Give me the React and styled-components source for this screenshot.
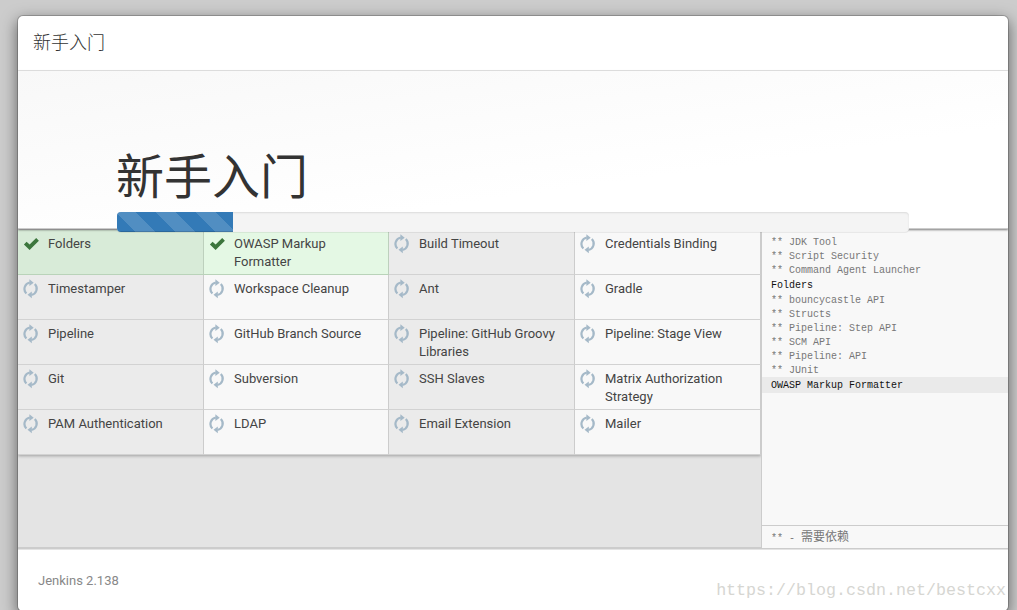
import React from "react";
import styled, { createGlobalStyle } from "styled-components";

const plugins = [
  { name: "Folders", done: true },
  { name: "OWASP Markup Formatter", done: true },
  { name: "Build Timeout" },
  { name: "Credentials Binding" },
  { name: "Timestamper" },
  { name: "Workspace Cleanup" },
  { name: "Ant" },
  { name: "Gradle" },
  { name: "Pipeline" },
  { name: "GitHub Branch Source" },
  { name: "Pipeline: GitHub Groovy Libraries" },
  { name: "Pipeline: Stage View" },
  { name: "Git" },
  { name: "Subversion" },
  { name: "SSH Slaves" },
  { name: "Matrix Authorization Strategy" },
  { name: "PAM Authentication" },
  { name: "LDAP" },
  { name: "Email Extension" },
  { name: "Mailer" },
];

const log = [
  { text: "** JDK Tool" },
  { text: "** Script Security" },
  { text: "** Command Agent Launcher" },
  { text: "Folders", selected: true },
  { text: "** bouncycastle API" },
  { text: "** Structs" },
  { text: "** Pipeline: Step API" },
  { text: "** SCM API" },
  { text: "** Pipeline: API" },
  { text: "** JUnit" },
  { text: "OWASP Markup Formatter", selected: true, current: true },
];

const CheckIcon = () => (
  <svg width="16" height="14" viewBox="0 0 16 14">
    <path d="M0.9 7.4 L3.6 4.7 L6.6 7.6 L13.2 1.1 L15.9 3.7 L6.6 12.9 Z" fill="#3c763d" />
  </svg>
);

const RefreshIcon = () => (
  <svg width="16" height="20" viewBox="0 0 16 20">
    <g fill="none" stroke="#a5b9c8" strokeWidth="2.2">
      <path d="M3.4 14.5 A6.5 6.5 0 0 1 6.8 3.5" />
      <path d="M11.8 5 A6.5 6.5 0 0 1 8.4 16" />
    </g>
    <path d="M6.4 0.3 L10.7 3.7 L6.4 7 Z" fill="#a5b9c8" />
    <path d="M8.8 19.2 L4.5 15.8 L8.8 12.5 Z" fill="#a5b9c8" />
  </svg>
);

const App = () => {
  return (
    <>
      <GlobalStyle />
      <Dialog>
        <Header>新手入门</Header>
        <Hero>
          <Title>新手入门</Title>
          <Progress>
            <ProgressBar />
          </Progress>
        </Hero>
        <Content>
          <PluginPane>
            <PluginGrid>
              {plugins.map((plugin, index) => (
                <Plugin key={plugin.name} $done={plugin.done} $odd={index % 2 === 0}>
                  <IconSlot $done={plugin.done}>
                    {plugin.done ? <CheckIcon /> : <RefreshIcon />}
                  </IconSlot>
                  <span>{plugin.name}</span>
                </Plugin>
              ))}
            </PluginGrid>
          </PluginPane>
          <Console>
            <LogList>
              {log.map((line) => (
                <LogLine key={line.text} $selected={line.selected} $current={line.current}>
                  {line.text}
                </LogLine>
              ))}
            </LogList>
            <Legend>
              ** - <b>需要依赖</b>
            </Legend>
          </Console>
        </Content>
        <Footer>Jenkins 2.138</Footer>
      </Dialog>
      <Watermark>https://blog.csdn.net/bestcxx</Watermark>
    </>
  );
};

const GlobalStyle = createGlobalStyle`
  * {
    box-sizing: border-box;
  }
  body {
    margin: 0;
    height: 610px;
    overflow: hidden;
    background: #ccc;
    color: #333;
    font-family: Roboto, "Noto Sans CJK SC", sans-serif;
    font-size: 13px;
  }
`;

const Dialog = styled.div`
  display: flex;
  flex-direction: column;
  width: 992px;
  height: 597px;
  margin: 15px 0 0 17px;
  overflow: hidden;
  background: #fff;
  background-clip: padding-box;
  border: 1px solid rgba(0, 0, 0, 0.2);
  border-radius: 6px;
  box-shadow: 0 5px 15px rgba(0, 0, 0, 0.5);
`;

const Header = styled.div`
  flex: none;
  height: 55px;
  padding: 0 15px;
  border-bottom: 1px solid #e5e5e5;
  font-family: "Noto Sans CJK SC", sans-serif;
  font-size: 18px;
  font-weight: 300;
  line-height: 51px;
`;

const Hero = styled.div`
  position: relative;
  z-index: 1;
  flex: none;
  height: 158px;
  padding: 71px 99px 0;
  background: linear-gradient(172deg, #f8f8f8 0%, #fff 66%);
  border-bottom: 1px solid #ccc;
  box-shadow: 0 1px 2px rgba(0, 0, 0, 0.5);
`;

const Title = styled.h1`
  height: 70px;
  margin: 0 0 0 -1px;
  font-family: "Noto Sans CJK SC", sans-serif;
  font-size: 48px;
  font-weight: 400;
  line-height: 62px;
`;

const Progress = styled.div`
  height: 20px;
  overflow: hidden;
  background: #f4f4f4;
  border-radius: 4px;
  box-shadow: inset 0 1px 2px rgba(0, 0, 0, 0.1), 0 1px 0 rgba(0, 0, 0, 0.06);
`;

const ProgressBar = styled.div`
  width: 116px;
  height: 100%;
  background-color: #337ab7;
  background-image: linear-gradient(
    45deg,
    rgba(255, 255, 255, 0.15) 25%,
    transparent 25%,
    transparent 50%,
    rgba(255, 255, 255, 0.15) 50%,
    rgba(255, 255, 255, 0.15) 75%,
    transparent 75%
  );
  background-position: -1px 0;
  background-size: 40px 40px;
  box-shadow: inset 0 -1px 0 rgba(0, 0, 0, 0.15);
`;

const Content = styled.div`
  display: flex;
  flex: none;
  height: 321px;
  border-bottom: 1px solid #e4e4e4;
`;

const PluginPane = styled.div`
  width: 743px;
  padding-top: 1px;
  background: #e4e4e4;
  border-bottom: 2px solid #ccc;
`;

const PluginGrid = styled.div`
  display: grid;
  grid-template-columns: 186px 185px 186px 186px;
  grid-auto-rows: 45px;
  box-shadow: 0 1px 3px rgba(0, 0, 0, 0.3);
`;

const Plugin = styled.div`
  display: flex;
  padding: 5px 17px 0 5px;
  color: #444;
  line-height: 18px;
  background: ${({ $done, $odd }) =>
    $done ? ($odd ? "#d8ebd8" : "#e4f8e4") : $odd ? "#ebebeb" : "#f8f8f8"};
  border-right: 1px solid ${({ $done }) => ($done ? "#bdd0bd" : "#ccc")};
  border-bottom: 1px solid ${({ $done }) => ($done ? "#b9d3b9" : "#d2d2d2")};
`;

const IconSlot = styled.span`
  flex: none;
  width: 25px;
  padding-top: ${({ $done }) => ($done ? "2px" : "0")};
  margin-top: ${({ $done }) => ($done ? "0" : "-1px")};

  svg {
    display: block;
  }
`;

const Console = styled.div`
  display: flex;
  flex: 1;
  flex-direction: column;
  background: #f8f8f8;
  border-left: 1px solid #ccc;
  border-bottom: 1px solid #ccc;
  color: #777;
  font-family: "Liberation Mono", "Noto Sans CJK SC", monospace;
  font-size: 10px;
`;

const LogList = styled.div`
  flex: 1;
  padding-top: 6px;
`;

const LogLine = styled.div`
  height: ${({ $selected }) => ($selected ? "16px" : "14px")};
  padding-left: 9px;
  line-height: ${({ $selected }) => ($selected ? "18px" : "16px")};
  color: ${({ $selected }) => ($selected ? "#111" : "#777")};
  background: ${({ $current }) => ($current ? "#eaeaea" : "transparent")};
  white-space: pre;
`;

const Legend = styled.div`
  height: 23px;
  padding-left: 9px;
  border-top: 1px solid #ccc;
  line-height: 25px;

  b {
    font-size: 12px;
    font-weight: 400;
  }
`;

const Footer = styled.div`
  flex: 1;
  padding: 22px 20px 0;
  color: #888;
  line-height: 18px;
`;

/* sits over the footer, right aligned with the dialog */
const Watermark = styled.div`
  position: absolute;
  right: 11px;
  top: 580px;
  color: #d6d6d2;
  font-family: "Liberation Mono", monospace;
  font-size: 16.66px;
  line-height: 22px;
`;

export default App;
